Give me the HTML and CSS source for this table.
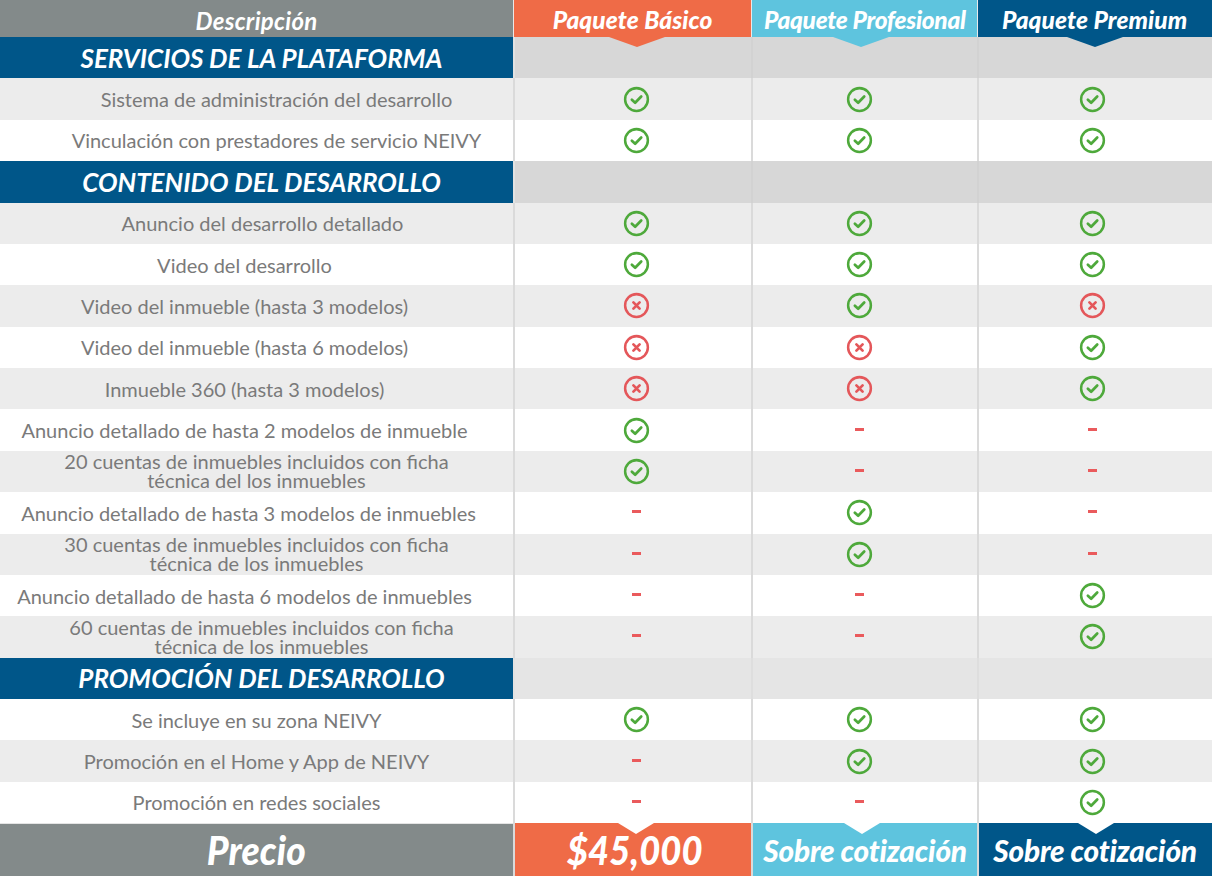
FILE: index.html
```html
<!DOCTYPE html>
<html lang="es">
<head>
<meta charset="utf-8">
<title>Paquetes NEIVY</title>
<link rel="stylesheet" href="styles.css">
</head>
<body>
<div class="table">
  <div class="row head">
    <div class="cell h-desc"><span class="hd">Descripción</span></div>
    <div class="cell h-pkg basic"><span class="cond">Paquete Básico</span></div>
    <div class="cell h-pkg prof"><span class="cond">Paquete Profesional</span></div>
    <div class="cell h-pkg prem"><span class="cond">Paquete Premium</span></div>
  </div>

  <div class="row section dark">
    <div class="cell s-title">SERVICIOS DE LA PLATAFORMA</div><div class="cell s-fill"></div><div class="cell s-fill"></div><div class="cell s-fill"></div>
  </div>
  <div class="row alt">
    <div class="cell desc r20">Sistema de administración del desarrollo</div>
    <div class="cell val"><svg class="ic ok"><use href="#ok"/></svg></div>
    <div class="cell val"><svg class="ic ok"><use href="#ok"/></svg></div>
    <div class="cell val"><svg class="ic ok"><use href="#ok"/></svg></div>
  </div>
  <div class="row">
    <div class="cell desc r20">Vinculación con prestadores de servicio NEIVY</div>
    <div class="cell val"><svg class="ic ok"><use href="#ok"/></svg></div>
    <div class="cell val"><svg class="ic ok"><use href="#ok"/></svg></div>
    <div class="cell val"><svg class="ic ok"><use href="#ok"/></svg></div>
  </div>

  <div class="row section dark">
    <div class="cell s-title">CONTENIDO DEL DESARROLLO</div><div class="cell s-fill"></div><div class="cell s-fill"></div><div class="cell s-fill"></div>
  </div>
  <div class="row alt">
    <div class="cell desc r6">Anuncio del desarrollo detallado</div>
    <div class="cell val"><svg class="ic ok"><use href="#ok"/></svg></div>
    <div class="cell val"><svg class="ic ok"><use href="#ok"/></svg></div>
    <div class="cell val"><svg class="ic ok"><use href="#ok"/></svg></div>
  </div>
  <div class="row">
    <div class="cell desc l12">Video del desarrollo</div>
    <div class="cell val"><svg class="ic ok"><use href="#ok"/></svg></div>
    <div class="cell val"><svg class="ic ok"><use href="#ok"/></svg></div>
    <div class="cell val"><svg class="ic ok"><use href="#ok"/></svg></div>
  </div>
  <div class="row alt">
    <div class="cell desc l12">Video del inmueble (hasta 3 modelos)</div>
    <div class="cell val"><svg class="ic no"><use href="#no"/></svg></div>
    <div class="cell val"><svg class="ic ok"><use href="#ok"/></svg></div>
    <div class="cell val"><svg class="ic no"><use href="#no"/></svg></div>
  </div>
  <div class="row">
    <div class="cell desc l12">Video del inmueble (hasta 6 modelos)</div>
    <div class="cell val"><svg class="ic no"><use href="#no"/></svg></div>
    <div class="cell val"><svg class="ic no"><use href="#no"/></svg></div>
    <div class="cell val"><svg class="ic ok"><use href="#ok"/></svg></div>
  </div>
  <div class="row alt">
    <div class="cell desc l12">Inmueble 360 (hasta 3 modelos)</div>
    <div class="cell val"><svg class="ic no"><use href="#no"/></svg></div>
    <div class="cell val"><svg class="ic no"><use href="#no"/></svg></div>
    <div class="cell val"><svg class="ic ok"><use href="#ok"/></svg></div>
  </div>
  <div class="row">
    <div class="cell desc l12">Anuncio detallado de hasta 2 modelos de inmueble</div>
    <div class="cell val"><svg class="ic ok"><use href="#ok"/></svg></div>
    <div class="cell val"><span class="dash"></span></div>
    <div class="cell val"><span class="dash"></span></div>
  </div>
  <div class="row alt">
    <div class="cell desc two">20 cuentas de inmuebles incluidos con ficha<br>técnica del los inmuebles</div>
    <div class="cell val"><svg class="ic ok"><use href="#ok"/></svg></div>
    <div class="cell val"><span class="dash"></span></div>
    <div class="cell val"><span class="dash"></span></div>
  </div>
  <div class="row">
    <div class="cell desc l8">Anuncio detallado de hasta 3 modelos de inmuebles</div>
    <div class="cell val"><span class="dash"></span></div>
    <div class="cell val"><svg class="ic ok"><use href="#ok"/></svg></div>
    <div class="cell val"><span class="dash"></span></div>
  </div>
  <div class="row alt">
    <div class="cell desc two">30 cuentas de inmuebles incluidos con ficha<br>técnica de los inmuebles</div>
    <div class="cell val"><span class="dash"></span></div>
    <div class="cell val"><svg class="ic ok"><use href="#ok"/></svg></div>
    <div class="cell val"><span class="dash"></span></div>
  </div>
  <div class="row">
    <div class="cell desc l12">Anuncio detallado de hasta 6 modelos de inmuebles</div>
    <div class="cell val"><span class="dash"></span></div>
    <div class="cell val"><span class="dash"></span></div>
    <div class="cell val"><svg class="ic ok"><use href="#ok"/></svg></div>
  </div>
  <div class="row alt">
    <div class="cell desc two r5">60 cuentas de inmuebles incluidos con ficha<br>técnica de los inmuebles</div>
    <div class="cell val"><span class="dash"></span></div>
    <div class="cell val"><span class="dash"></span></div>
    <div class="cell val"><svg class="ic ok"><use href="#ok"/></svg></div>
  </div>

  <div class="row section light">
    <div class="cell s-title">PROMOCIÓN DEL DESARROLLO</div><div class="cell s-fill"></div><div class="cell s-fill"></div><div class="cell s-fill"></div>
  </div>
  <div class="row">
    <div class="cell desc">Se incluye en su zona NEIVY</div>
    <div class="cell val"><svg class="ic ok"><use href="#ok"/></svg></div>
    <div class="cell val"><svg class="ic ok"><use href="#ok"/></svg></div>
    <div class="cell val"><svg class="ic ok"><use href="#ok"/></svg></div>
  </div>
  <div class="row alt">
    <div class="cell desc">Promoción en el Home y App de NEIVY</div>
    <div class="cell val"><span class="dash"></span></div>
    <div class="cell val"><svg class="ic ok"><use href="#ok"/></svg></div>
    <div class="cell val"><svg class="ic ok"><use href="#ok"/></svg></div>
  </div>
  <div class="row">
    <div class="cell desc">Promoción en redes sociales</div>
    <div class="cell val"><span class="dash"></span></div>
    <div class="cell val"><span class="dash"></span></div>
    <div class="cell val"><svg class="ic ok"><use href="#ok"/></svg></div>
  </div>

  <div class="row foot">
    <div class="cell f-desc"><span class="cond big">Precio</span></div>
    <div class="cell f-pkg basic"><span class="cond big">$45,000</span></div>
    <div class="cell f-pkg prof"><span class="cond mid">Sobre cotización</span></div>
    <div class="cell f-pkg prem"><span class="cond mid">Sobre cotización</span></div>
  </div>
</div>

<svg class="defs" width="0" height="0" aria-hidden="true">
  <symbol id="ok" viewBox="0 0 28 28">
    <circle cx="14" cy="14" r="11.8" fill="none" stroke="currentColor" stroke-width="2.6"/>
    <path d="M9.2 14.2 L12.6 17.4 L18.9 10.9" fill="none" stroke="currentColor" stroke-width="2.8" stroke-linecap="round" stroke-linejoin="round"/>
  </symbol>
  <symbol id="no" viewBox="0 0 28 28">
    <circle cx="14" cy="14" r="11.8" fill="none" stroke="currentColor" stroke-width="2.6"/>
    <path d="M10.8 10.8 L17.2 17.2 M17.2 10.8 L10.8 17.2" fill="none" stroke="currentColor" stroke-width="2.8" stroke-linecap="round"/>
  </symbol>
</svg>
</body>
</html>
```

FILE: styles.css
```css
* { box-sizing: border-box; }
html, body { margin: 0; padding: 0; background: #ffffff; }
body {
  width: 1212px;
  height: 876px;
  overflow: hidden;
  font-family: Lato, "Open Sans", sans-serif;
}
.defs { position: absolute; width: 0; height: 0; }

.table {
  display: flex;
  flex-direction: column;
  width: 1212px;
  height: 876px;
}
.row {
  display: grid;
  grid-template-columns: 513px 238px 226px 235px;
  flex: 1 1 0;
  background: #ffffff;
}
.row.alt { background: #ececec; }

.cell {
  display: flex;
  align-items: center;
  justify-content: center;
  min-width: 0;
}
.row .val, .row .s-fill { border-left: 2px solid #dadada; }

/* header */
.row.head { flex: 0 0 37px; position: relative; z-index: 2; }
.h-desc { background: #838a8a; color: #fff; padding-top: 4px; }
.hd { font-weight: 700; font-style: italic; font-size: 24px; letter-spacing: 0.3px; }
.h-pkg { position: relative; color: #fff; border-left: 1px solid #e9e9e9; padding-top: 1px; }
.h-pkg::after {
  content: "";
  position: absolute;
  left: 50%;
  top: 100%;
  margin-left: -28px;
  border-left: 28px solid transparent;
  border-right: 28px solid transparent;
  border-top: 10px solid var(--c);
}
.basic { background: #ef6b47; --c: #ef6b47; }
.prof { background: #5ec4de; --c: #5ec4de; }
.prem { background: #005689; --c: #005689; }
.h-pkg.basic::after { margin-left: -24px; }
.h-pkg.prof::after { margin-left: -32px; }

.cond {
  display: inline-block;
  font-weight: 900;
  font-style: italic;
  font-size: 25px;
  letter-spacing: 0.1px;
  transform: scaleX(0.98);
  white-space: nowrap;
}
.h-pkg.prof .cond { letter-spacing: -0.3px; }

/* section rows */
.s-title {
  background: #005689;
  color: #fff;
  font-weight: 700;
  font-style: italic;
  font-size: 26px;
  padding-left: 10px;
}
.section.dark .s-fill { background: #d7d7d7; border-left-color: #d2d2d2; }
.section.light .s-fill { background: #e5e5e5; border-left-color: #dedede; }
.section .s-fill:nth-child(2) { border-left-color: #e2e2e2; }

/* description */
.desc {
  color: #7a7a7a;
  font-weight: 400;
  font-size: 20px;
  text-align: center;
  line-height: 1;
  white-space: nowrap;
}
.desc.two { line-height: 19px; }
.r20 { padding-left: 40px; }
.r6 { padding-left: 12px; }
.r5 { padding-left: 10px; }
.l12 { padding-right: 24px; }
.l8 { padding-right: 16px; }

.val:nth-child(2) { padding-left: 6px; }
.val:nth-child(3) { padding-right: 12px; }
.val:nth-child(4) { padding-right: 6px; }
.ic { width: 27px; height: 27px; display: block; }
.ic.ok { color: #4ea93b; }
.ic.no { color: #e4575a; }
.dash {
  display: block;
  width: 9px;
  height: 3px;
  background: #ea5a5c;
  margin-top: -2px;
}

/* footer */
.row.foot { flex: 0 0 53px; }
.f-desc { background: #838a8a; color: #fff; border-top: 1px solid #e4e4e4; }
.f-pkg { position: relative; color: #fff; border-left: 2px solid #dadada; }
.f-pkg::before {
  content: "";
  position: absolute;
  left: 50%;
  top: 0;
  margin-left: -18px;
  border-left: 18px solid transparent;
  border-right: 18px solid transparent;
  border-top: 11px solid #ffffff;
}
.f-pkg.basic::before { margin-left: -15px; }
.f-pkg.prof::before { margin-left: -21px; }
.f-pkg.prem::before { margin-left: -18px; }
.big { font-size: 40px; transform: scaleX(0.93); }
.mid { font-size: 31px; transform: scaleX(0.96); letter-spacing: -0.2px; }
.f-pkg.basic .big { font-size: 39px; transform: scaleX(0.93); padding-left: 4px; }
```
